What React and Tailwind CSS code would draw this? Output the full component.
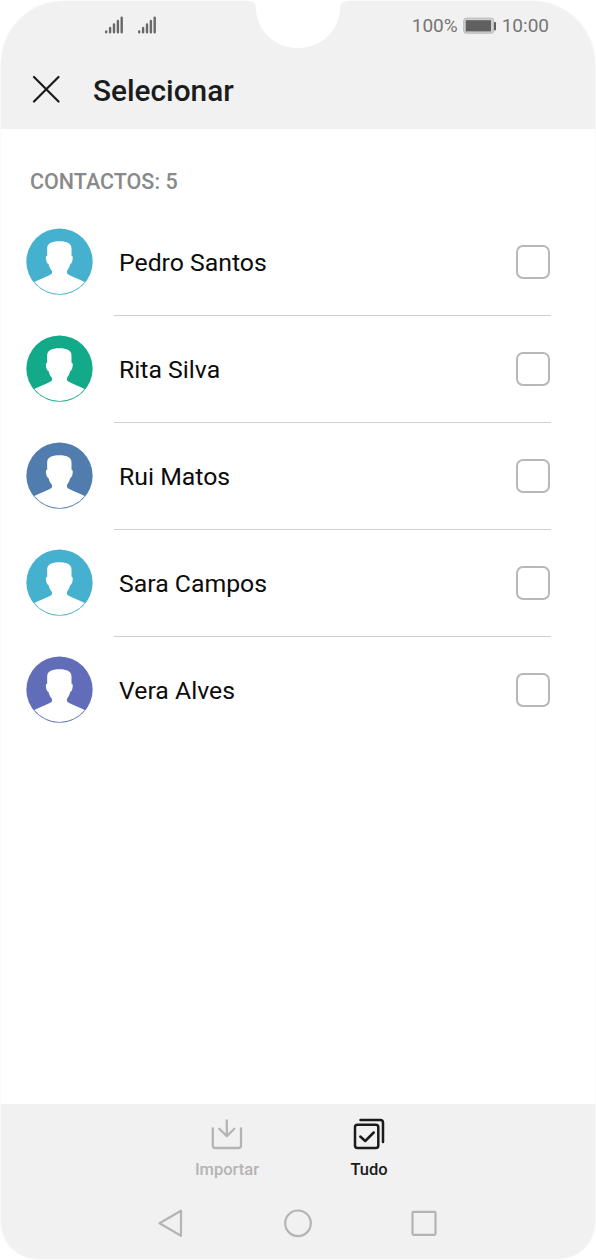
import React, { useState } from 'react';

const contacts = [
  { name: 'Pedro Santos', color: '#45b1ce' },
  { name: 'Rita Silva', color: '#12aa88' },
  { name: 'Rui Matos', color: '#507cae' },
  { name: 'Sara Campos', color: '#45b1ce' },
  { name: 'Vera Alves', color: '#616db9' },
];

const Signal = () => (
  <svg width="20" height="20" viewBox="0 0 20 20" stroke="#686868" strokeWidth="2.4" strokeLinecap="round">
    <path d="M2.2 16.4v.8M6.1 13v4.2M10 9.4v7.8M13.9 6v11.2M17.7 2.7v14.5" />
  </svg>
);

const Battery = () => (
  <svg width="34" height="18" viewBox="0 0 34 18">
    <rect x="0.7" y="1.2" width="30" height="15" rx="2.5" fill="#d0d0d0" stroke="#b8b8b8" strokeWidth="1" />
    <rect x="2.7" y="3.2" width="25.3" height="11.2" fill="#606060" />
    <rect x="31" y="5" width="2" height="8.5" rx="0.8" fill="#606060" />
  </svg>
);

const Avatar = ({ color }) => (
  <svg className="shrink-0" width="67" height="67" viewBox="18.5 18 201 201">
    <circle cx="119" cy="119" r="99.5" fill={color} />
    <path
      fill="#fff"
      d="M82 101V80C82 65 95 58 118.500 58S155 65 155 80V101C159 101 159.500 107 158 114C157 121 155 124 151.500 126C149 135 145 141 141.500 147C141 150 141 153 143 156C156 165 179 171 194.400 180A97 97 0 0 1 43.600 180C59 171 82 165 95 156C97 153 97 150 96.500 147C92 141 88 135 86 126C82 124 80 121 79 114C77.500 107 78 101 82 101Z"
    />
  </svg>
);

const StatusBar = () => (
  <div className="h-[51px] flex items-center justify-between pl-[103px] pr-[46px]">
    <div className="flex gap-[13px] pb-[3px]">
      <Signal />
      <Signal />
    </div>
    <div className="flex items-center text-[19px] text-[#757575]">
      <span>100%</span>
      <span className="ml-[5px] mr-[5px] pb-[2px]"><Battery /></span>
      <span>10:00</span>
    </div>
  </div>
);

const ContactRow = ({ contact, checked, last, onToggle }) => (
  <div className="h-[107px] flex pl-[26px] pr-[45px]">
    <div className="w-[88px] flex items-center pb-[2px]">
      <Avatar color={contact.color} />
    </div>
    <div className={`flex-1 flex items-center justify-between pl-[5px] border-b ${last ? 'border-transparent' : 'border-[#d0d0d0]'}`}>
      <span className="pt-[2px] text-[24.8px] text-[#0c0c0c]">{contact.name}</span>
      <button
        onClick={onToggle}
        aria-label={contact.name}
        className={`w-[34px] h-[34px] mr-px rounded-[7px] border-2 border-[#b8b8b8] ${checked ? 'bg-[#507cae]' : 'bg-white'}`}
      />
    </div>
  </div>
);

const App = () => {
  const [selected, setSelected] = useState([]);

  const toggle = (name) => {
    setSelected(selected.includes(name) ? selected.filter((n) => n !== name) : [...selected, name]);
  };

  const toggleAll = () => {
    setSelected(selected.length === contacts.length ? [] : contacts.map((c) => c.name));
  };

  return (
    <div className="relative w-[596px] h-[1260px] bg-white font-['Roboto',sans-serif] overflow-hidden">
      <div className="h-full flex flex-col rounded-t-[64px] rounded-b-[38px] border border-[#fafafa] overflow-hidden">
        <header className="h-[128px] bg-[#f1f1f1] shrink-0">
          <StatusBar />
          <div className="h-[77px] flex items-center pl-[31px]">
            <svg className="mb-[3px]" width="28" height="28" viewBox="0 0 28 28" stroke="#1b1b1b" strokeWidth="2.2" strokeLinecap="round">
              <path d="M2 2L26.5 26.5M26.5 2L2 26.5" />
            </svg>
            <h1 className="ml-[33px] pt-px text-[29.8px] font-medium text-[#1b1b1b]">Selecionar</h1>
          </div>
        </header>

        <main className="flex-1 -mx-px">
          <div className="h-[80px] flex items-center pl-[30px] pt-[25px]">
            <h2 className="text-[21.5px] leading-[25px] h-[25px] font-medium text-[#898989]">CONTACTOS: {contacts.length}</h2>
          </div>
          {contacts.map((contact, i) => (
            <ContactRow
              key={contact.name}
              contact={contact}
              checked={selected.includes(contact.name)}
              last={i === contacts.length - 1}
              onToggle={() => toggle(contact.name)}
            />
          ))}
        </main>

        <footer className="h-[155px] bg-[#f1f1f1] shrink-0">
          <div className="flex h-[84px] pt-[14px] pl-[155px] text-[16.5px] leading-[20px] font-medium">
            <button className="w-[142px] flex flex-col items-center text-[#b4b4b4]">
              <svg width="32" height="32" viewBox="0 0 32 32" fill="none" stroke="currentColor" strokeWidth="2.3" strokeLinecap="round" strokeLinejoin="round">
                <path d="M1.8 10.3V27.5Q1.8 30 4.3 30H27.5Q30 30 30 27.5V10.3M15.8 2.3V18.2M8.3 10.8L15.8 18.2L23.3 10.8" />
              </svg>
              <span className="mt-[10px]">Importar</span>
            </button>
            <button onClick={toggleAll} className="w-[142px] flex flex-col items-center text-[#1b1b1b]">
              <svg width="32" height="32" viewBox="0 0 32 32" fill="none" stroke="currentColor" strokeWidth="2.5" strokeLinecap="round" strokeLinejoin="round">
                <rect x="2" y="6.7" width="23.3" height="23.3" rx="2.5" />
                <path d="M7.5 2H27.3Q30 2 30 4.7V24M7.3 18.5L12.2 23L20.7 14.5" />
              </svg>
              <span className="mt-[10px]">Tudo</span>
            </button>
          </div>
          <nav className="h-[70px] flex items-center justify-between pl-[155px] pr-[158px]">
            <svg width="28" height="30" viewBox="0 0 28 30" fill="none" stroke="#b4b4b4" strokeWidth="2.2" strokeLinejoin="round">
              <path d="M3.5 15.3L25 2.8V27.8Z" />
            </svg>
            <svg width="30" height="30" viewBox="0 0 30 30" fill="none" stroke="#b4b4b4" strokeWidth="2.2">
              <circle cx="15" cy="15.3" r="12.8" />
            </svg>
            <svg width="26" height="26" viewBox="0 0 26 26" fill="none" stroke="#b4b4b4" strokeWidth="2.2">
              <rect x="1.5" y="1.8" width="23" height="23" rx="1" />
            </svg>
          </nav>
        </footer>
      </div>

      {/* camera notch */}
      <svg className="absolute top-0 left-[248px]" width="100" height="50" viewBox="0 0 100 50">
        <path fill="#fff" d="M0 0V1H2Q8 1 8 9C9 31 27 48 50 48S91 31 92 9Q92 1 98 1H100V0Z" />
      </svg>
    </div>
  );
};

export default App;
